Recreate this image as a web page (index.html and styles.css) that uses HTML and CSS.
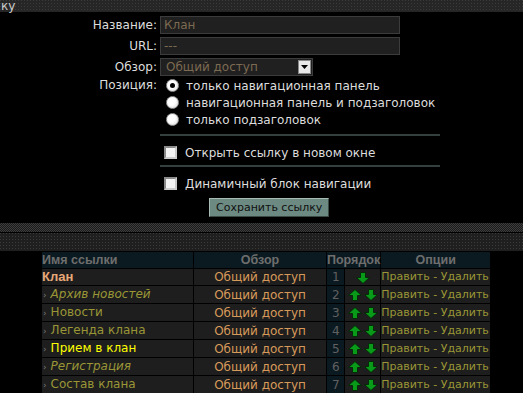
FILE: index.html
```html
<!DOCTYPE html>
<html lang="ru">
<head>
    <meta charset="UTF-8">
    <title>Ссылки навигации</title>
    <link rel="stylesheet" href="styles.css">
</head>
<body>
    <div class="topbar">ку</div>

    <form class="link-form">
        <label class="lbl">Название:</label>
        <input class="field" type="text" value="Клан">

        <label class="lbl">URL:</label>
        <input class="field" type="text" value="---">

        <label class="lbl">Обзор:</label>
        <div class="select">
            <span>Общий доступ</span>
            <span class="select-btn">
                <svg width="7" height="4" viewBox="0 0 7 4"><polygon points="0,0 7,0 3.5,4" fill="#000"/></svg>
            </span>
        </div>

        <label class="lbl lbl-top">Позиция:</label>
        <div class="options">
            <label class="opt"><input type="radio" name="pos" checked> только навигационная панель</label>
            <label class="opt"><input type="radio" name="pos"> навигационная панель и подзаголовок</label>
            <label class="opt"><input type="radio" name="pos"> только подзаголовок</label>
            <hr class="sep first">
            <label class="opt chk"><input type="checkbox"> Открыть ссылку в новом окне</label>
            <hr class="sep">
            <label class="opt chk"><input type="checkbox"> Динамичный блок навигации</label>
            <div class="actions"><button type="button" class="save">Сохранить ссылку</button></div>
        </div>
    </form>

    <div class="stripe"><div class="checker"></div><div class="dots"></div></div>

    <table class="links">
        <tr class="head">
            <th class="c-name">Имя ссылки</th>
            <th class="c-view">Обзор</th>
            <th colspan="2">Порядок</th>
            <th class="c-opt">Опции</th>
        </tr>
        <tr>
            <td class="c-name"><b class="top">Клан</b></td>
            <td class="c-view">Общий доступ</td>
            <td class="num">1</td>
            <td class="arrows"><svg width="14" height="12" viewBox="0 0 14 12"><polygon points="4.5,0.5 9.5,0.5 9.5,5.5 13.5,5.5 7,11.5 0.5,5.5 4.5,5.5"/></svg></td>
            <td class="c-opt">Править - Удалить</td>
        </tr>
        <tr>
            <td class="c-name"><span class="bul">›</span><i class="lnk">Архив новостей</i></td>
            <td class="c-view">Общий доступ</td>
            <td class="num">2</td>
            <td class="arrows"><svg width="14" height="12" viewBox="0 0 14 12"><polygon points="7,0.5 13.5,6.5 9.5,6.5 9.5,11.5 4.5,11.5 4.5,6.5 0.5,6.5"/></svg><svg width="14" height="12" viewBox="0 0 14 12"><polygon points="4.5,0.5 9.5,0.5 9.5,5.5 13.5,5.5 7,11.5 0.5,5.5 4.5,5.5"/></svg></td>
            <td class="c-opt">Править - Удалить</td>
        </tr>
        <tr>
            <td class="c-name"><span class="bul">›</span><span class="lnk">Новости</span></td>
            <td class="c-view">Общий доступ</td>
            <td class="num">3</td>
            <td class="arrows"><svg width="14" height="12" viewBox="0 0 14 12"><polygon points="7,0.5 13.5,6.5 9.5,6.5 9.5,11.5 4.5,11.5 4.5,6.5 0.5,6.5"/></svg><svg width="14" height="12" viewBox="0 0 14 12"><polygon points="4.5,0.5 9.5,0.5 9.5,5.5 13.5,5.5 7,11.5 0.5,5.5 4.5,5.5"/></svg></td>
            <td class="c-opt">Править - Удалить</td>
        </tr>
        <tr>
            <td class="c-name"><span class="bul">›</span><span class="lnk">Легенда клана</span></td>
            <td class="c-view">Общий доступ</td>
            <td class="num">4</td>
            <td class="arrows"><svg width="14" height="12" viewBox="0 0 14 12"><polygon points="7,0.5 13.5,6.5 9.5,6.5 9.5,11.5 4.5,11.5 4.5,6.5 0.5,6.5"/></svg><svg width="14" height="12" viewBox="0 0 14 12"><polygon points="4.5,0.5 9.5,0.5 9.5,5.5 13.5,5.5 7,11.5 0.5,5.5 4.5,5.5"/></svg></td>
            <td class="c-opt">Править - Удалить</td>
        </tr>
        <tr>
            <td class="c-name"><span class="bul">›</span><span class="lnk hot">Прием в клан</span></td>
            <td class="c-view">Общий доступ</td>
            <td class="num">5</td>
            <td class="arrows"><svg width="14" height="12" viewBox="0 0 14 12"><polygon points="7,0.5 13.5,6.5 9.5,6.5 9.5,11.5 4.5,11.5 4.5,6.5 0.5,6.5"/></svg><svg width="14" height="12" viewBox="0 0 14 12"><polygon points="4.5,0.5 9.5,0.5 9.5,5.5 13.5,5.5 7,11.5 0.5,5.5 4.5,5.5"/></svg></td>
            <td class="c-opt">Править - Удалить</td>
        </tr>
        <tr>
            <td class="c-name"><span class="bul">›</span><i class="lnk">Регистрация</i></td>
            <td class="c-view">Общий доступ</td>
            <td class="num">6</td>
            <td class="arrows"><svg width="14" height="12" viewBox="0 0 14 12"><polygon points="7,0.5 13.5,6.5 9.5,6.5 9.5,11.5 4.5,11.5 4.5,6.5 0.5,6.5"/></svg><svg width="14" height="12" viewBox="0 0 14 12"><polygon points="4.5,0.5 9.5,0.5 9.5,5.5 13.5,5.5 7,11.5 0.5,5.5 4.5,5.5"/></svg></td>
            <td class="c-opt">Править - Удалить</td>
        </tr>
        <tr>
            <td class="c-name"><span class="bul">›</span><span class="lnk">Состав клана</span></td>
            <td class="c-view">Общий доступ</td>
            <td class="num">7</td>
            <td class="arrows"><svg width="14" height="12" viewBox="0 0 14 12"><polygon points="7,0.5 13.5,6.5 9.5,6.5 9.5,11.5 4.5,11.5 4.5,6.5 0.5,6.5"/></svg><svg width="14" height="12" viewBox="0 0 14 12"><polygon points="4.5,0.5 9.5,0.5 9.5,5.5 13.5,5.5 7,11.5 0.5,5.5 4.5,5.5"/></svg></td>
            <td class="c-opt">Править - Удалить</td>
        </tr>
        <tr>
            <td class="c-name"><span class="bul">›</span><span class="lnk">Правила</span></td>
            <td class="c-view">Общий доступ</td>
            <td class="num">8</td>
            <td class="arrows"><svg width="14" height="12" viewBox="0 0 14 12"><polygon points="7,0.5 13.5,6.5 9.5,6.5 9.5,11.5 4.5,11.5 4.5,6.5 0.5,6.5"/></svg><svg width="14" height="12" viewBox="0 0 14 12"><polygon points="4.5,0.5 9.5,0.5 9.5,5.5 13.5,5.5 7,11.5 0.5,5.5 4.5,5.5"/></svg></td>
            <td class="c-opt">Править - Удалить</td>
        </tr>
    </table>
</body>
</html>
```

FILE: styles.css
```css
* { margin: 0; padding: 0; box-sizing: border-box; }
html, body { background: #000; overflow: hidden; }
body { font-family: "DejaVu Sans", Verdana, sans-serif; font-size: 12px; color: #ddd; }

/* dotted title bar */
.topbar {
    height: 12px;
    line-height: 12px;
    font-size: 12px;
    color: #ccc;
    padding-left: 1px;
    background-color: #3a3a3a;
    background-image:
        linear-gradient(to right, transparent 1px, #262626 1px),
        linear-gradient(to bottom, transparent 1px, #262626 1px);
    background-size: 3px 3px, 3px 3px;
}

/* form */
.link-form {
    display: grid;
    grid-template-columns: 157px 280px;
    column-gap: 3px;
    row-gap: 3px;
    padding-top: 4px;
    align-items: center;
}
.lbl { text-align: right; line-height: 17px; }
.lbl-top { align-self: start; margin-top: -2px; }
.field {
    width: 240px;
    height: 18px;
    background: #202020;
    border: 1px solid #3c3c3c;
    color: #7c6a52;
    font: 12px "DejaVu Sans", Verdana, sans-serif;
    padding: 0 3px;
    outline: none;
}
.select {
    width: 153px;
    height: 18px;
    background: #202020;
    border: 1px solid #3c3c3c;
    color: #7c6a52;
    display: flex;
    align-items: center;
    justify-content: space-between;
    padding-left: 5px;
}
.select-btn {
    width: 13px;
    height: 14px;
    margin-right: 1px;
    background: #e8e8e8;
    border: 1px solid #888;
    display: flex;
    align-items: center;
    justify-content: center;
}
.options { display: flex; flex-direction: column; margin-top: -2px; }
.opt { display: flex; align-items: center; gap: 7px; height: 17px; padding-left: 6px; }
.opt input[type=radio] {
    appearance: none;
    width: 13px;
    height: 13px;
    border-radius: 50%;
    background: radial-gradient(circle at 40% 40%, #fff 40%, #cfcfcf 100%);
    border: 1px solid #999;
    display: grid;
    place-items: center;
}
.opt input[type=radio]:checked::after {
    content: "";
    width: 5px;
    height: 5px;
    border-radius: 50%;
    background: #000;
}
.chk { padding-left: 4px; gap: 8px; }
.chk input {
    appearance: none;
    width: 13px;
    height: 13px;
    background: #f4f4f4;
    border: 2px solid #8a8a8a;
    border-right-color: #ccc;
    border-bottom-color: #ccc;
}
.sep {
    border: none;
    height: 2px;
    width: 280px;
    background: #34403e;
    margin: 4px 0 8px;
}
.sep.first { margin-top: 6px; }
.actions { padding: 6px 0 0 49px; }
.save {
    height: 19px;
    padding: 0 6px;
    background: #6c8a82;
    border: 1px solid #a8bcb6;
    border-right-color: #3c4a46;
    border-bottom-color: #3c4a46;
    color: #101010;
    font: 11px "DejaVu Sans", Verdana, sans-serif;
}

/* separator band */
.stripe { margin-top: 6px; }
.checker {
    height: 9px;
    background: repeating-conic-gradient(#3c3c3c 0 25%, #1c1c1c 0 50%) 0 0 / 2px 2px;
}
.dots {
    height: 18px;
    margin-top: 1px;
    background-color: #3a3a3a;
    background-image:
        linear-gradient(to right, transparent 1px, #1f1f1f 1px),
        linear-gradient(to bottom, transparent 1px, #1f1f1f 1px);
    background-size: 3px 3px, 3px 3px;
}

/* links table */
.links {
    margin: 0 0 0 41px;
    border-collapse: separate;
    border-spacing: 1px;
    font-size: 12px;
}
.links th {
    height: 16px;
    background: #0b1a20;
    color: #6e6e6e;
    font: bold 12.5px "Liberation Sans", Arial, sans-serif;
    padding: 0;
}
.links td {
    height: 16px;
    background: #1e1e1e;
    padding: 0;
    white-space: nowrap;
    line-height: 16px;
}
.head .c-name { text-align: left; }
.c-name { width: 151px; }
.c-view { width: 132px; text-align: center; color: #d89a5a; }
.c-opt { width: 109px; color: #9a9636; font-size: 11px; }
.num { width: 17px; background: #0b1a20 !important; color: #606060; text-align: center; }
.arrows { width: 34px; text-align: center; }
.arrows svg { vertical-align: middle; margin: 0 1px; }
.arrows polygon { fill: #0a9a1a; stroke: #052a08; stroke-width: 1; }
.top { color: #e8a878; font: bold 13px "Liberation Sans", Arial, sans-serif; }
.bul { color: #777; font-size: 9px; margin: 0 4px 0 1px; }
.lnk { color: #9a9636; }
.hot { color: #ffff00; }
```
